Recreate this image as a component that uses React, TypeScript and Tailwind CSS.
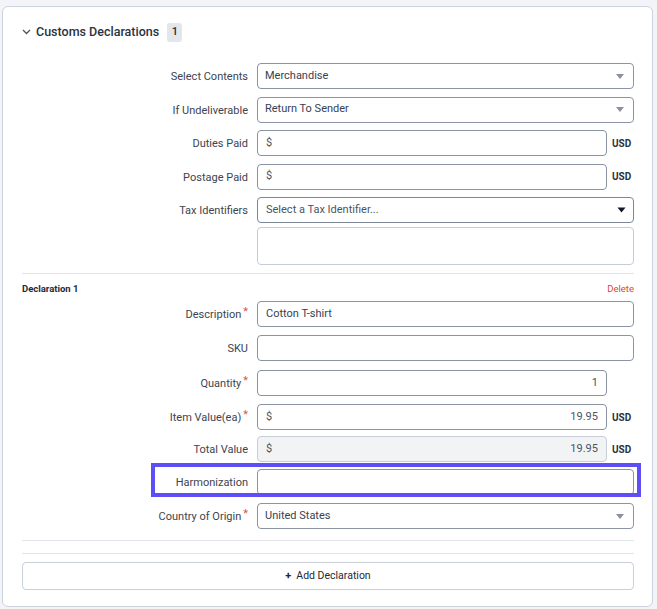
import { ReactNode } from "react"

const font = { fontFamily: "Roboto, 'Noto Sans', Arial, sans-serif" }

function Caret({ dark = false }: { dark?: boolean }) {
  return dark ? (
    <svg width="9" height="6" viewBox="0 0 9 6" className="shrink-0">
      <path d="M0.5 0.5h8L4.5 5.5z" fill="#111827" />
    </svg>
  ) : (
    <svg width="8" height="5" viewBox="0 0 8 5" className="shrink-0">
      <path d="M0 0h8L4 5z" fill="#8b929c" />
    </svg>
  )
}

function Label({ text, required }: { text: string; required?: boolean }) {
  return (
    <div className="w-[235px] shrink-0 pr-[9px] flex justify-end items-center text-[11px] text-[#3d4450]">
      <span className="mt-[3px]">{text}</span>
      {required && <span className="text-[#e0513b] text-[11px] ml-[2px] -mt-[4px]">*</span>}
    </div>
  )
}

function Row({ label, required, children }: { label: string; required?: boolean; children: ReactNode }) {
  return (
    <div className="flex items-center h-[26px]">
      <Label text={label} required={required} />
      <div className="flex-1 flex items-center h-full">{children}</div>
    </div>
  )
}

function SelectBox({ value }: { value: string }) {
  return (
    <div className="flex-1 h-full flex items-center justify-between border border-[#8a94a2] rounded-[4px] bg-white pl-[7px] pr-[9px] text-[11px] text-[#374151]">
      <span>{value}</span>
      <Caret />
    </div>
  )
}

function Money({ value, disabled }: { value?: string; disabled?: boolean }) {
  return (
    <>
      <div
        className={
          "w-[350px] h-full flex items-center justify-between rounded-[4px] px-[8px] text-[11px] text-[#4b5563] border " +
          (disabled ? "bg-[#f1f3f5] border-[#c7ced8]" : "bg-white border-[#8a94a2]")
        }
      >
        <span>$</span>
        <span>{value}</span>
      </div>
      <span className="ml-[5px] text-[10px] font-bold text-[#2b323c]">USD</span>
    </>
  )
}

export default function App() {
  return (
    <div className="w-[657px] h-[609px] bg-[#f3f4f7] pt-[6px] pl-[2px] pr-[4px]" style={font}>
      <div className="bg-white border border-[#cbd3de] rounded-[6px] h-[601px] pl-[19px] pr-[18px]">
        <div className="flex items-center h-[51px] pb-[1px]">
          <svg width="9" height="6" viewBox="0 0 9 6" className="mr-[5px]">
            <path d="M1 1l3.5 3.5L8 1" fill="none" stroke="#4b5563" strokeWidth="1.3" />
          </svg>
          <span className="text-[12.5px] font-medium text-[#2b3340]">Customs Declarations</span>
          <span className="ml-[8px] h-[19px] px-[4.5px] rounded-[3px] bg-[#e3e6ea] text-[11px] text-[#1f2937] flex items-center font-medium">
            1
          </span>
        </div>

        <div className="flex flex-col gap-[7.5px] mt-[5px]">
          <Row label="Select Contents">
            <SelectBox value="Merchandise" />
          </Row>
          <Row label="If Undeliverable">
            <SelectBox value="Return To Sender" />
          </Row>
          <Row label="Duties Paid">
            <Money />
          </Row>
          <Row label="Postage Paid">
            <Money />
          </Row>
          <Row label="Tax Identifiers">
            <div className="flex-1 h-full flex items-center justify-between border border-[#7c8694] rounded-[4px] bg-white pl-[8px] pr-[7px] text-[11px] text-[#4b5563]">
              <span>Select a Tax Identifier...</span>
              <Caret dark />
            </div>
          </Row>
        </div>
        <div className="flex mt-[4px]">
          <div className="w-[235px] shrink-0" />
          <div className="flex-1 h-[38px] border border-[#c5ccd6] rounded-[4px]" />
        </div>

        <div className="border-t border-[#e1e5ea] mt-[8px]" />

        <div className="flex items-center justify-between h-[29px] pt-[1px] text-[9.5px]">
          <span className="font-bold text-[#1f2937]">Declaration 1</span>
          <span className="text-[#e0452b]">Delete</span>
        </div>

        <div className="flex flex-col gap-[8px] mt-[-2px]">
          <Row label="Description" required>
            <div className="flex-1 h-full flex items-center border border-[#8a94a2] rounded-[4px] px-[8px] text-[11px] text-[#374151]">
              Cotton T-shirt
            </div>
          </Row>
          <Row label="SKU">
            <div className="flex-1 h-full border border-[#8a94a2] rounded-[4px]" />
          </Row>
          <div className="mt-[1px]">
            <Row label="Quantity" required>
              <div className="w-[350px] h-full flex items-center justify-end border border-[#8a94a2] rounded-[4px] px-[8px] text-[11px] text-[#4b5563]">
                1
              </div>
            </Row>
          </div>
          <Row label="Item Value(ea)" required>
            <Money value="19.95" />
          </Row>
          <div className="-mt-[2px]">
            <Row label="Total Value">
              <Money value="19.95" disabled />
            </Row>
          </div>
          <div className="relative -mt-[1px]">
            <div className="absolute left-[129px] top-[-6px] w-[490px] h-[34px] border-[4px] border-[#5b4ff5] pointer-events-none" />
            <Row label="Harmonization">
              <div className="flex-1 h-full border border-[#8a94a2] rounded-[4px] bg-white" />
            </Row>
          </div>
          <Row label="Country of Origin" required>
            <SelectBox value="United States" />
          </Row>
        </div>

        <div className="border-t border-[#e1e5ea] mt-[11px]" />
        <div className="border-t border-[#e1e5ea] mt-[12px]" />

        <div className="mt-[8px] h-[28px] border border-[#c9d0da] rounded-[4px] flex items-center justify-center text-[10.5px] text-[#1f2937]">
          <span className="mr-[5px] text-[11px] font-bold">+</span>
          Add Declaration
        </div>
      </div>
    </div>
  )
}
